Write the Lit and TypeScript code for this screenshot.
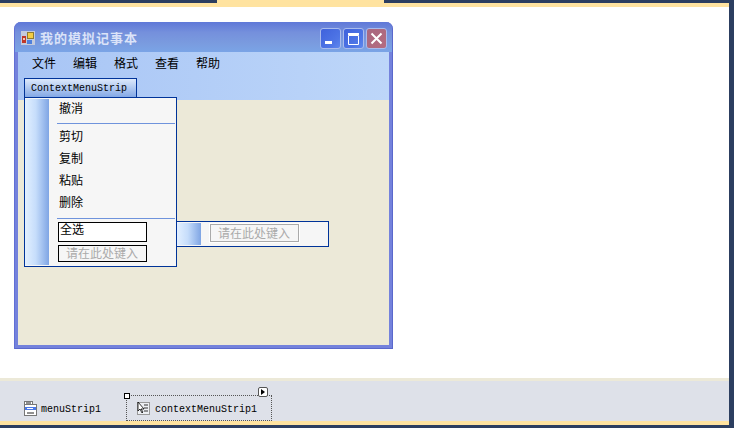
import { LitElement, html, css } from "lit";
import { customElement } from "lit/decorators.js";

@customElement("app-root")
export class AppRoot extends LitElement {
  static styles = css`
    :host { display: block; width: 734px; height: 428px; overflow: hidden; font-family: "Noto Sans CJK SC", sans-serif; font-size: 12px; color: #000; }
    * { box-sizing: border-box; }
    .page { width: 734px; height: 428px; background: #2c3e60; display: flex; flex-direction: column; }
    .top { height: 3px; display: flex; flex: none; }
    .top .tab { width: 167px; margin-left: 217px; background: #ffe3a0; }
    .main { flex: 1; display: flex; }
    .inner { width: 729px; display: flex; flex-direction: column; }
    .rule { height: 4px; flex: none; background: #ffe3a0; }
    .canvas { flex: 1; background: #fff; padding: 15px 0 0 14px; }
    .cream { height: 3px; flex: none; background: #ece9d8; }
    .bottom { height: 3px; flex: none; }

    .win { width: 379px; height: 327px; position: relative; display: flex; flex-direction: column; background: #7482dc; border-radius: 7px 7px 0 0; padding: 0 4px 4px; box-shadow: inset 1px 0 #6270d4, inset -1px 0 #5a68cc, inset 0 -1px #5a68cc; }
    .title { height: 30px; flex: none; margin: 0 -3px; padding: 0 5px 0 6px; display: flex; align-items: center; border-radius: 6px 6px 0 0; background: linear-gradient(#5f78d8, #7590dc 35%, #7a9bdf 70%, #7aa4e6); }
    .title svg.logo { margin-right: 5px; margin-top: 2px; }
    .title .name { flex: 1; font-weight: 700; font-size: 13px; letter-spacing: 1px; color: #dbe3f8; }
    .ctl { width: 21px; height: 21px; margin-left: 2px; margin-top: 2px; border: 1px solid #a9bbec; border-radius: 3px; background: linear-gradient(135deg, #3f62dc, #4f76e6 70%, #5f88ee); display: flex; }
    .ctl.close { background: linear-gradient(135deg, #a86880, #b56c80); }
    .strip { height: 48px; flex: none; background: linear-gradient(90deg, #a8c5f5, #bdd6f9); display: flex; flex-direction: column; }
    .menubar { height: 26px; flex: none; display: flex; align-items: center; padding: 0 0 5px 14px; }
    .menubar span { width: 41px; }
    .cms-tab { width: 113px; height: 20px; margin-left: 6px; flex: none; border: 1px solid #003399; border-bottom: 0; background: linear-gradient(#dde9fb, #7fa5e4); font: 10px "Liberation Mono", monospace; padding-left: 6px; line-height: 20px; }
    .body { flex: 1; background: #ece9d8; }

    .menu { position: absolute; left: 10px; top: 75px; width: 153px; height: 170px; border: 1px solid #003399; background: #f6f6f6; padding: 1px 0; display: flex; }
    .grip { width: 24px; flex: none; background: linear-gradient(90deg, #e3f0ff, #c6ddfb 45%, #7fa5e4); }
    .col { width: 118px; margin-left: 8px; display: flex; flex-direction: column; }
    .item { height: 22px; flex: none; padding-left: 2px; line-height: 22px; }
    .item.first { height: 19px; line-height: 17px; }
    .sep { height: 1px; flex: none; margin-top: 5px; background: #6f93dc; }
    .sep.upper { margin-bottom: 1px; }
    .box { width: 89px; margin-left: 1px; flex: none; border: 1px solid #000; }
    .edit { height: 20px; margin-top: 3px; background: #fff; padding-left: 1px; line-height: 12px; }
    .hint { height: 17px; margin-top: 3px; color: #aaa; padding-left: 7px; line-height: 13px; }

    .sub { position: absolute; left: 152px; top: 123px; width: 152px; height: 26px; border: 1px solid #003399; border-left: 0; background: #f6f6f6; padding: 1px 0; display: flex; }
    .sub .hint { margin: 1px 0 0 9px; width: 89px; height: 18px; border-color: #aaa; background: #f6f6f6; outline: 1px solid #fff; line-height: 16px; }

    .tray { height: 40px; flex: none; background: #dee1e9; display: flex; align-items: flex-start; padding: 14px 0 0 24px; font: 10px "Liberation Mono", monospace; }
    .comp { display: flex; align-items: center; gap: 4px; height: 26px; padding-top: 1px; }
    .comp span.label { position: relative; top: 1px; }
    .sel { position: relative; margin-left: 25px; width: 146px; height: 26px; border: 1px dotted #555; padding-left: 10px; gap: 5px; }
    .handle { position: absolute; left: -3px; top: -3px; width: 6px; height: 6px; background: #fff; border: 1px solid #000; }
    .glyph { position: absolute; left: 131px; top: -9px; width: 10px; height: 10px; background: #fff; border: 1px solid #555; border-radius: 2px; display: flex; align-items: center; justify-content: center; }
  `;

  render() {
    return html`
      <div class="page">
        <div class="top"><div class="tab"></div></div>
        <div class="main">
          <div class="inner">
            <div class="rule"></div>
            <div class="canvas">
              <div class="win">
                <div class="title">
                  <svg class="logo" width="14" height="14" viewBox="0 0 14 14">
                    <rect width="14" height="14" fill="#c4cbdc" />
                    <rect x="1" y="5" width="4" height="7" fill="#c03828" />
                    <rect x="2" y="7" width="2" height="2" fill="#f0c8b0" />
                    <rect x="6" y="1" width="7" height="7" fill="#8f7c30" />
                    <rect x="7" y="2" width="5" height="5" fill="#f4cc44" />
                    <rect x="6" y="9" width="5" height="4" fill="#4f80dc" />
                  </svg>
                  <span class="name">我的模拟记事本</span>
                  <div class="ctl">
                    <svg width="19" height="19" viewBox="0 0 19 19"><rect x="4" y="12" width="7" height="3" fill="#fff" /></svg>
                  </div>
                  <div class="ctl">
                    <svg width="19" height="19" viewBox="0 0 19 19"><path d="M4.5 6.5h10v9h-10z" fill="none" stroke="#fff" /><rect x="4" y="4" width="11" height="2" fill="#fff" /></svg>
                  </div>
                  <div class="ctl close">
                    <svg width="19" height="19" viewBox="0 0 19 19"><path d="M4.5 4.5l10 10M14.5 4.5l-10 10" stroke="#fff" stroke-width="2" /></svg>
                  </div>
                </div>
                <div class="strip">
                  <div class="menubar">
                    <span>文件</span><span>编辑</span><span>格式</span><span>查看</span><span>帮助</span>
                  </div>
                  <div class="cms-tab">ContextMenuStrip</div>
                </div>
                <div class="body"></div>

                <div class="menu">
                  <div class="grip"></div>
                  <div class="col">
                    <div class="item first">撤消</div>
                    <div class="sep upper"></div>
                    <div class="item">剪切</div>
                    <div class="item">复制</div>
                    <div class="item">粘贴</div>
                    <div class="item">删除</div>
                    <div class="sep"></div>
                    <div class="box edit">全选</div>
                    <div class="box hint">请在此处键入</div>
                  </div>
                  <div class="sub">
                    <div class="grip"></div>
                    <div class="box hint">请在此处键入</div>
                  </div>
                </div>
              </div>
            </div>
            <div class="cream"></div>
            <div class="tray">
              <div class="comp">
                <svg width="13" height="15" viewBox="0 0 13 15">
                  <rect x="0.5" y="0.5" width="8" height="3" fill="#fff" stroke="#777" />
                  <rect x="0.5" y="3.5" width="12" height="11" fill="#fff" stroke="#777" />
                  <rect x="1" y="6" width="11" height="3" fill="#4a78e8" />
                  <path d="M2 2h5M3 7.5h6" stroke="#fff" />
                  <path d="M2 2h5M3 12h7" stroke="#222" />
                </svg>
                <span class="label">menuStrip1</span>
              </div>
              <div class="comp sel">
                <span class="handle"></span>
                <span class="glyph">
                  <svg width="5" height="6" viewBox="0 0 5 6"><path d="M0 0l4 3-4 3z" fill="#000" /></svg>
                </span>
                <svg width="13" height="13" viewBox="0 0 13 13">
                  <rect x="0.5" y="0.5" width="12" height="12" fill="#eef0f4" stroke="#999" />
                  <path d="M7 3h4M7 6h4M7 9h4" stroke="#333" />
                  <path d="M1 0l0 9 2-2 2 4 1-1-2-3 3 0z" fill="#fff" stroke="#000" stroke-width="0.8" />
                </svg>
                <span class="label">contextMenuStrip1</span>
              </div>
            </div>
            <div class="rule"></div>
          </div>
        </div>
        <div class="bottom"></div>
      </div>
    `;
  }
}
